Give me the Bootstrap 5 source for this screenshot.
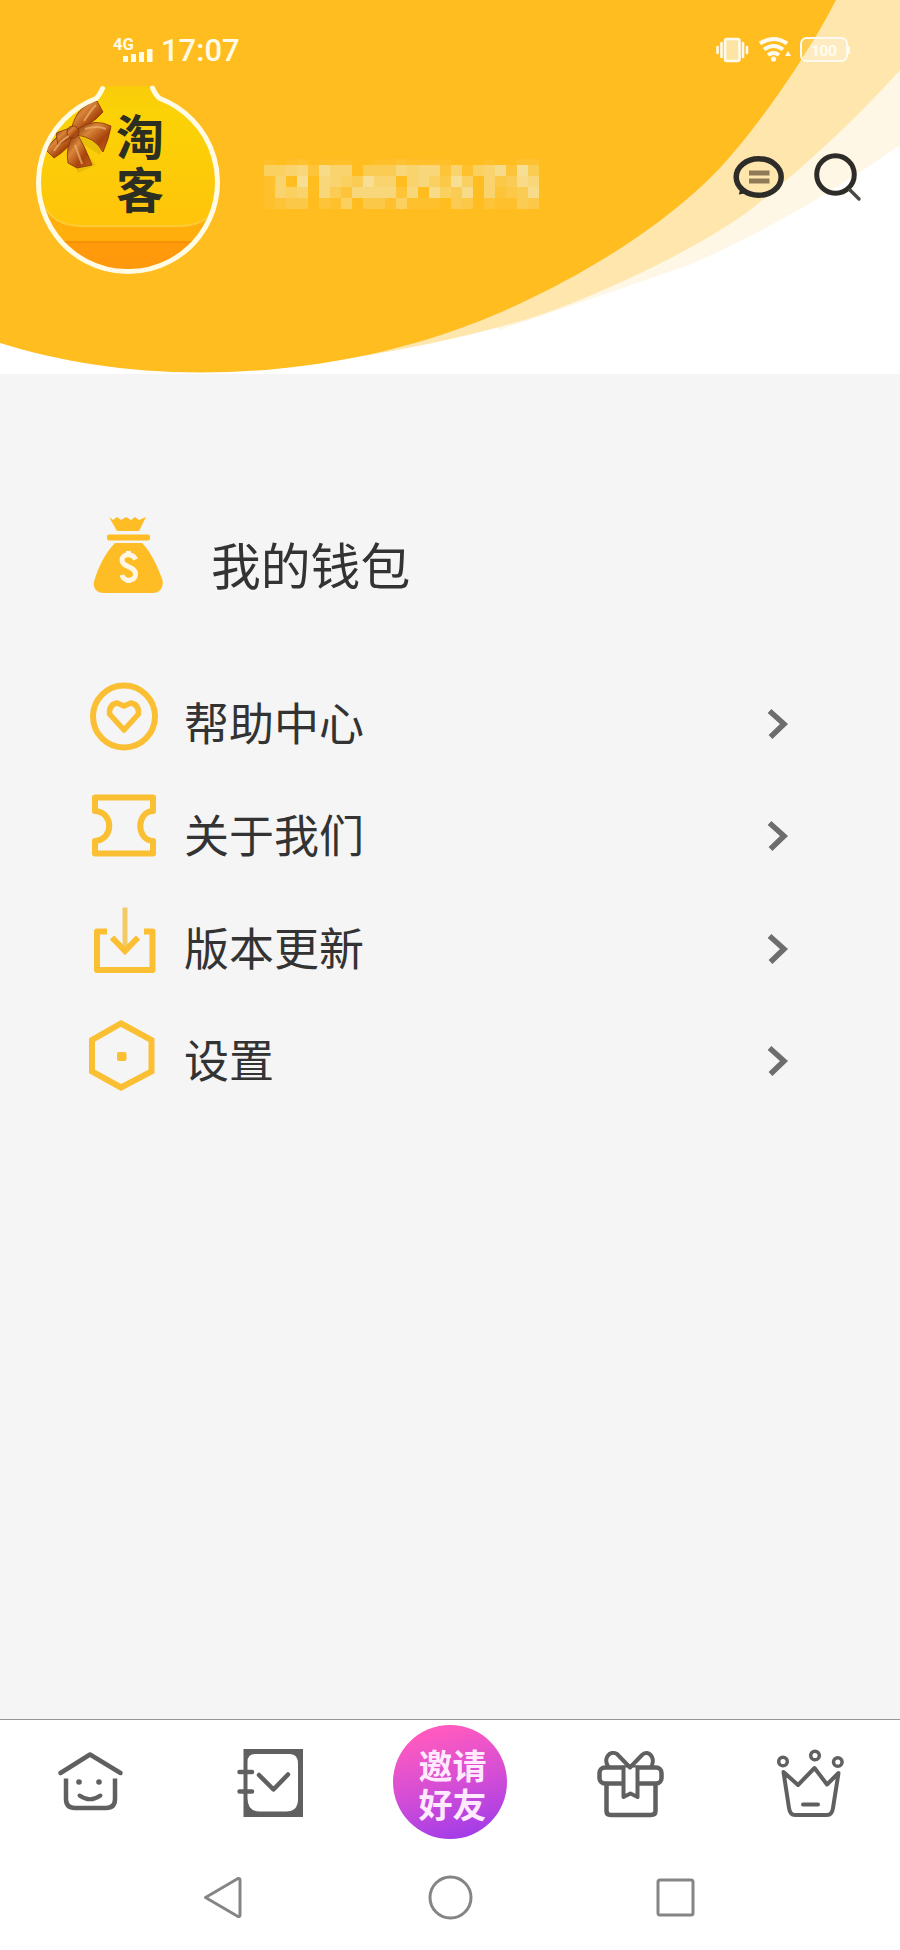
<!DOCTYPE html>
<html lang="zh-CN">
<head>
<meta charset="utf-8">
<meta name="viewport" content="width=device-width, initial-scale=1">
<title>我的</title>
<link href="https://cdn.jsdelivr.net/npm/bootstrap@5.3.0/dist/css/bootstrap.min.css" rel="stylesheet">
<style>
  body { font-family: "Noto Sans CJK SC", sans-serif; color: #333; background: #f5f5f5; }
  .phone { width: 900px; height: 1950px; }
  .hero { height: 374px; background: #fff; }
  .hero-bg { z-index: 0; }
  .status-bar { height: 84px; padding: 30px 46px 0 112px; }
  .signal { margin-top: 4px; }
  .clock { font: 500 31px/30px Roboto, sans-serif; color: #fffbe6; margin: 6px 0 0 1px; }
  .profile { height: 198px; padding-left: 30px; }
  .phone-mask { margin-left: 34px; }
  .wallet { height: 293.5px; padding: 139px 0 0 80px; }
  .wallet-name { font-size: 49.8px; line-height: 101px; margin-left: 31px; }
  .menu-row { height: 112.5px; padding: 0 100px 0 80px; }
  .menu-name { font-size: 45px; line-height: 108px; padding-bottom: 4px; margin-left: 4px; }
  .line-icon { fill: none; stroke: #fbbf33; stroke-width: 6; }
  .tabs { height: 127px; background: #fff; border-top: 1px solid #969696; }
  .tab-icon { fill: none; stroke: #606060; stroke-width: 4.5; stroke-linecap: round; stroke-linejoin: round; }
  .invite { width: 114px; height: 114px; margin-top: 5px; padding: 3px 0 0 5px; font-size: 34px; line-height: 39px; font-weight: 700;
            color: #ffeaff; background: linear-gradient(165deg, #ff5abf 12%, #d54ed5 52%, #a13ce8 92%); }
  .system-nav { height: 104px; background: #fff; padding: 0 112.5px; }
  .system-nav svg { fill: none; stroke: #858585; stroke-width: 3; stroke-linejoin: round; }
  svg { display: block; flex-shrink: 0; }
</style>
</head>
<body>
<div class="phone d-flex flex-column overflow-hidden">
  <header class="hero position-relative">
    <svg class="hero-bg position-absolute top-0 start-0" width="900" height="374" viewBox="0 0 900 374">
      <path fill="#fff7e6" d="M0 0H900V145C840 187 770 230 689 265L608 293 500 330Z"/>
      <path fill="#fee6ad" d="M0 0H900V70C860 115 805 167 746 213C690 253 600 294 540 315Q460 341 340 360Z"/>
      <path fill="#ffbd20" d="M0 0H836C808 55 750 140 706 182C655 230 590 271 517 305C420 350 310 372.500 201 372.500C125 372.500 58 361 0 343Z"/>
    </svg>
    <div class="position-relative">
      <div class="status-bar d-flex align-items-start justify-content-between">
        <div class="d-flex align-items-start">
          <svg class="signal" width="48" height="34" viewBox="112 34 48 34" fill="#fffbe6">
            <text x="113" y="50" font-family="Roboto" font-size="17" font-weight="700" textLength="21" lengthAdjust="spacingAndGlyphs">4G</text>
            <path d="M123 56h5v6h-5zM131 54h5v8h-5zM139 52h5v10h-5zM147 49h5.500v13H147z"/>
          </svg>
          <span class="clock">17:07</span>
        </div>
        <svg width="140" height="40" viewBox="714 30 140 40" fill="none" stroke="#fffaf0" stroke-width="2.600">
          <rect x="725" y="39" width="14.500" height="22" rx="2" fill="#fce5a2"/>
          <path d="M721.500 43v14M717.500 47v6M743 43v14M747 47v6" stroke-linecap="round"/>
          <path d="M760 43.500Q773.500 34.500 787 43.500M764 49.500Q773.500 42.500 783 49.500M768 55Q773.500 51 779 55" stroke-width="4"/>
          <circle cx="773.500" cy="59" r="2.600" fill="#fffaf0" stroke="none"/>
          <path d="M785 56l3-5 3 5z" fill="#fffaf0" stroke="none"/>
          <rect x="801" y="38" width="46" height="23" rx="5.500" stroke-width="2" fill="#fff" fill-opacity=".22"/>
          <path d="M849 46v8" stroke-width="2"/>
          <text x="811" y="56" font-family="Roboto" font-size="15.500" font-weight="700" textLength="26" fill="#fffdf2" stroke="none">100</text>
        </svg>
      </div>
      <div class="profile d-flex">
        <svg width="200" height="198" viewBox="30 84 200 198">
          <defs>
            <clipPath id="face"><path d="M104 86H151L160 100A89 89 0 1 1 97 100Z"/></clipPath>
            <linearGradient id="gold" x1="0" y1="0" x2="0" y2="1"><stop offset="0" stop-color="#f8c90c"/><stop offset=".3" stop-color="#fbd206"/><stop offset="1" stop-color="#ffc40b"/></linearGradient>
            <linearGradient id="base" x1="0" y1="0" x2="0" y2="1"><stop offset="0" stop-color="#fb9c0b"/><stop offset=".35" stop-color="#ff9f05"/><stop offset="1" stop-color="#ff980d"/></linearGradient>
            <linearGradient id="silk" x1="0" y1="0" x2="1" y2="1"><stop offset="0" stop-color="#7d2a05"/><stop offset=".35" stop-color="#d9853a"/><stop offset=".65" stop-color="#a8440c"/><stop offset="1" stop-color="#c4601c"/></linearGradient>
          </defs>
          <g clip-path="url(#face)">
            <rect x="30" y="84" width="200" height="198" fill="url(#base)"/>
            <path fill="#ffae0c" d="M30 190H230V242H30Z"/>
            <path d="M30 242H230" stroke="#f38b05" stroke-width="1.500"/>
            <path fill="url(#gold)" stroke="#ffca32" stroke-width="2" d="M30 70H230V170C218 212 210 226 177 226H84C52 226 44 212 34 180Z"/>
            <path fill="#c9a108" opacity=".35" d="M48 158L66 145 78 173 96 165 78 141 100 155 112 128 80 138Z"/>
            <g fill="url(#silk)" stroke="#853308" stroke-width=".8">
              <path d="M72 127C75 115 82 104 97 101L103 112 96 119 78 132Z"/>
              <path d="M79 128Q95 118 111 126Q109 139 103 152Q95 137 76 135Z"/>
              <path d="M70 133C58 131 49 146 46 150L54 158Q69 149 74 137Z"/>
              <path d="M74 135Q65 146 68 163L77 168 92 165Q85 147 78 135Z"/>
              <path d="M56 133L70 128 74 136 58 145Z"/>
              <circle cx="73" cy="132" r="6"/>
            </g>
            <path d="M84 121Q91 110 96 105M85 129Q97 125 106 129M54 151Q61 140 69 136M75 145L82 164" fill="none" stroke="#edb56f" stroke-width="2" opacity=".7"/>
          </g>
          <path d="M102.500 88.500Q99 96 96 98.500A89.500 89.500 0 1 0 160 98.500Q156 96 152.500 88" fill="none" stroke="#fffbe4" stroke-width="5" stroke-linecap="round" stroke-linejoin="round"/>
          <g fill="#2c2e22" font-family="Noto Sans CJK SC" font-size="48" font-weight="700">
            <text x="116" y="155">淘</text>
            <text x="116" y="208">客</text>
          </g>
        </svg>
        <svg id="mask" class="phone-mask" role="img" aria-label="手机号" width="275" height="140" viewBox="264 84 275 140" shape-rendering="crispEdges"></svg>
        <svg class="ms-auto" width="180" height="140" viewBox="720 84 180 140" fill="none" stroke="#2d2c28" stroke-linecap="round">
          <ellipse cx="758.700" cy="177" rx="22.500" ry="18.300" stroke-width="5.500"/>
          <path d="M741.500 189L740.500 193 746 192" stroke-width="2.500"/>
          <path d="M749 173H769.500M749 181H769.500" stroke="#8f7a59" stroke-width="5" stroke-linecap="butt"/>
          <circle cx="835.500" cy="174.500" r="18.800" stroke-width="5"/>
          <path d="M850 190L859 199" stroke-width="3.400" stroke="#4a4845"/>
        </svg>
      </div>
    </div>
  </header>

  <main class="flex-grow-1">
    <section class="wallet d-flex align-items-start">
      <svg width="100" height="90" viewBox="80 513 100 90" fill="#ffbd25">
        <path d="M109 517L113 520 117 517 121 520 126 517 131 520 135 517 139 520 146 517 139 531H117Z"/>
        <rect x="107" y="534.500" width="43" height="6" rx="2"/>
        <path d="M115 543H142C152 553 159 570 162.500 580C164 587 160 593 153 593H104C96 593 92 587 94.500 580C98 568 105 553 115 543Z"/>
        <path d="M135.500 559.500C133 553 122 553 122 560C122 568 135.500 565.500 135.500 574C135.500 582 123.500 582 122 575M128.500 551V555M128.500 579V583" fill="none" stroke="#fff6e4" stroke-width="5"/>
      </svg>
      <span class="wallet-name">我的钱包</span>
    </section>

    <nav>
      <a class="menu-row d-flex align-items-center text-reset text-decoration-none" href="#">
        <svg class="line-icon" width="100" height="112" viewBox="80 667.500 100 112">
          <circle cx="124" cy="716" r="31"/>
          <path stroke-width="5.500" stroke-linejoin="round" d="M124 729.500L109.500 713.500Q109 704 117 702.500L124 705.500 131 702.500Q139 704 138.500 713.500Z"/>
        </svg>
        <span class="menu-name">帮助中心</span>
        <svg class="ms-auto" width="40" height="40" viewBox="0 0 40 40"><path d="M9.500 7L24 20 10.500 33" fill="none" stroke="#6d6d6d" stroke-width="5.500"/></svg>
      </a>
      <a class="menu-row d-flex align-items-center text-reset text-decoration-none" href="#">
        <svg class="line-icon" width="100" height="112" viewBox="80 780 100 112">
          <path stroke-linejoin="round" d="M95 811V797.500H153V811C136 812 136 840 153 841V853.500H95V841C114 840 114 812 95 811Z"/>
        </svg>
        <span class="menu-name">关于我们</span>
        <svg class="ms-auto" width="40" height="40" viewBox="0 0 40 40"><path d="M9.500 7L24 20 10.500 33" fill="none" stroke="#6d6d6d" stroke-width="5.500"/></svg>
      </a>
      <a class="menu-row d-flex align-items-center text-reset text-decoration-none" href="#">
        <svg class="line-icon" width="100" height="112" viewBox="80 892.500 100 112">
          <path stroke-linejoin="round" d="M107 931H97V969.500H152.500V931H144"/>
          <path d="M125 907V949" stroke="#f3cb66" stroke-width="5"/>
          <path d="M112 937L125 950.500 138 937"/>
        </svg>
        <span class="menu-name">版本更新</span>
        <svg class="ms-auto" width="40" height="40" viewBox="0 0 40 40"><path d="M9.500 7L24 20 10.500 33" fill="none" stroke="#6d6d6d" stroke-width="5.500"/></svg>
      </a>
      <a class="menu-row d-flex align-items-center text-reset text-decoration-none" href="#">
        <svg class="line-icon" width="100" height="112" viewBox="80 1005 100 112">
          <path d="M121 1023.500L151.500 1040V1071.500L121 1087.500 92 1071.500V1040Z"/>
          <rect x="117" y="1052" width="9.500" height="9" rx="2" fill="#fbbf33" stroke="none"/>
        </svg>
        <span class="menu-name">设置</span>
        <svg class="ms-auto" width="40" height="40" viewBox="0 0 40 40"><path d="M9.500 7L24 20 10.500 33" fill="none" stroke="#6d6d6d" stroke-width="5.500"/></svg>
      </a>
    </nav>
  </main>

  <footer>
    <nav class="tabs row row-cols-5 g-0">
      <a class="col" href="#" aria-label="首页">
        <svg class="tab-icon" width="180" height="126" viewBox="0 1720 180 126">
          <path d="M60.500 1773L90 1754.500 120.500 1773"/>
          <path stroke-linecap="butt" d="M66 1778.500V1799Q66 1808 75 1808H106Q115 1808 115 1799V1778.500"/>
          <path d="M79.500 1795.500Q90 1803 100.500 1795.500" stroke-width="4"/>
          <circle cx="79" cy="1782" r="2.800" fill="#606060" stroke="none"/><circle cx="99" cy="1782" r="2.800" fill="#606060" stroke="none"/>
        </svg>
      </a>
      <a class="col" href="#" aria-label="订单">
        <svg class="tab-icon" width="180" height="126" viewBox="180 1720 180 126">
          <path fill="#606060" fill-rule="evenodd" stroke="none" d="M243.500 1749H303V1817H243.500ZM255 1754Q247.500 1754 247.500 1762V1798Q247.500 1811.500 260 1811.500H286Q298 1811.500 298 1799V1764Q298 1754 290 1754Z"/>
          <path d="M239.500 1772H252M239.500 1791.500H252M259 1775L273.500 1789.500 288 1774.500"/>
        </svg>
      </a>
      <div class="col d-flex justify-content-center">
        <a class="invite rounded-circle d-flex flex-column align-items-center justify-content-center text-decoration-none" href="#"><span>邀请</span><span>好友</span></a>
      </div>
      <a class="col" href="#" aria-label="礼物">
        <svg class="tab-icon" width="180" height="126" viewBox="540 1720 180 126">
          <rect x="599.500" y="1767.500" width="62" height="16" rx="5.500"/>
          <path d="M606.500 1784V1811Q606.500 1815 610.500 1815H651Q655.500 1815 655.500 1811V1784"/>
          <path fill="#fff" stroke-width="4" d="M623.500 1767.500V1797L630.500 1793.500 637.500 1797V1767.500"/>
          <path stroke-width="4" d="M608 1766C603 1758 610 1750 617 1754L630 1767.500 642 1755C649 1749 655 1758 652 1765"/>
        </svg>
      </a>
      <a class="col" href="#" aria-label="会员">
        <svg class="tab-icon" width="180" height="126" viewBox="720 1720 180 126">
          <path stroke-width="4" d="M783.500 1772L798 1785 814.500 1768 827 1784.500 838.500 1773 833 1808Q832 1815 827 1815H795Q790 1815 789 1808Z"/>
          <path d="M803 1804.500H818" stroke-width="4"/>
          <g stroke-width="3.500"><circle cx="783" cy="1761.500" r="4.300"/><circle cx="815" cy="1755.500" r="4.300"/><circle cx="837.800" cy="1762" r="4.300"/></g>
        </svg>
      </a>
    </nav>
    <div class="system-nav d-flex">
      <svg width="225" height="104" viewBox="112.500 1846 225 104"><path d="M205 1897.500L237.500 1878.500Q239.500 1878 239.500 1880V1915Q239.500 1917 237.500 1916.500Z"/></svg>
      <svg width="225" height="104" viewBox="337.500 1846 225 104"><circle cx="450" cy="1897.500" r="20.500"/></svg>
      <svg width="225" height="104" viewBox="562.500 1846 225 104"><rect x="657.500" y="1880" width="35" height="35" rx="2"/></svg>
    </div>
  </footer>
</div>
<script>
  // Privacy mosaic over the account number: each digit is a tile's strength.
  const tiles = [
    [159, 6,  "1012011100112111100010022"],
    [165, 11, "5567286604447677261568294"],
    [176, 11, "1609076549660675395063487"],
    [187, 11, "1656074277772708548062348"],
    [198, 11, "1233021503315111043021143"]
  ];
  document.getElementById("mask").innerHTML = tiles.map(([y, h, row]) =>
    [...row].map((v, i) => `<rect x="${264 + i * 11}" y="${y}" width="11" height="${h}" fill="#f5e2a0" opacity="${v / 9 * (h < 11 ? .55 : .92)}"/>`).join("")
  ).join("");
</script>
<script src="https://cdn.jsdelivr.net/npm/bootstrap@5.3.0/dist/js/bootstrap.bundle.min.js"></script>
</body>
</html>
